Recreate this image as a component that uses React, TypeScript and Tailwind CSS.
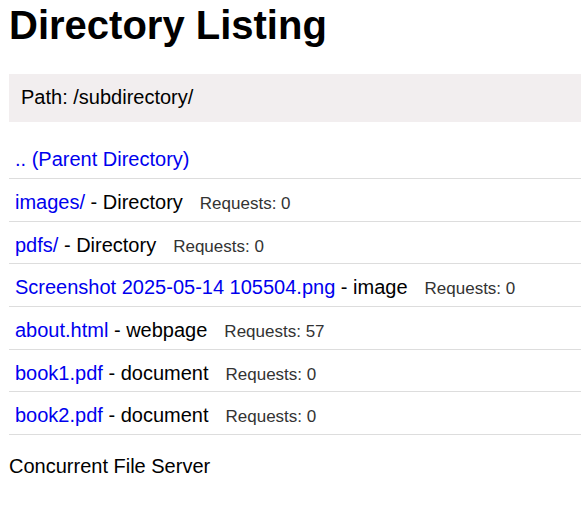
const entries = [
    { name: 'images/', kind: 'Directory', requests: 0 },
    { name: 'pdfs/', kind: 'Directory', requests: 0 },
    { name: 'Screenshot 2025-05-14 105504.png', kind: 'image', requests: 0 },
    { name: 'about.html', kind: 'webpage', requests: 57 },
    { name: 'book1.pdf', kind: 'document', requests: 0 },
    { name: 'book2.pdf', kind: 'document', requests: 0 },
]

export default function App() {
    return (
        <div className="min-h-screen bg-white pl-[9px] pt-[1.5px] text-black" style={{ fontFamily: '"Liberation Sans", Arial, sans-serif' }}>
            <h1 className="text-[40px] font-bold leading-[46px]">Directory Listing</h1>

            <div className="mt-[26.5px] bg-[#f2eeef] px-3 pt-[11.6px] pb-[13px] text-[20px] leading-[23px]">
                Path: /subdirectory/
            </div>

            <ul className="mt-[14.6px] text-[20px] leading-[23px]">
                <li className="border-b border-[#dddddd] pl-[6px] pt-3 pb-[6.7px]">
                    <a href="#" className="text-[#0000ee]">.. (Parent Directory)</a>
                </li>
                {entries.map((e) => (
                    <li key={e.name} className="border-b border-[#dddddd] pl-[6px] pt-3 pb-[6.7px]">
                        <a href="#" className="text-[#0000ee]">{e.name}</a> - {e.kind}
                        <span className="ml-[17px] text-[17px] leading-none text-[#333333]">Requests: {e.requests}</span>
                    </li>
                ))}
            </ul>

            <p className="mt-5 text-[20px] leading-[23px]">Concurrent File Server</p>
        </div>
    )
}
